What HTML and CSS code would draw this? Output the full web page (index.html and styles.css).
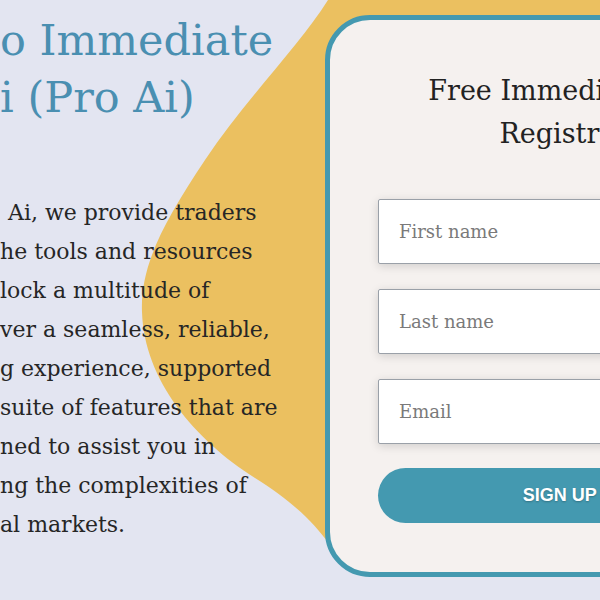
FILE: index.html
```html
<!DOCTYPE html>
<html lang="en">
<head>
    <meta charset="UTF-8">
    <meta name="viewport" content="width=device-width, initial-scale=1.0">
    <title>Immediate Pro Ai</title>
    <link rel="stylesheet" href="styles.css">
</head>
<body>
    <div class="hero">
        <!-- yellow shape behind the hero -->
        <svg class="blob" width="600" height="600" viewBox="0 0 600 600">
            <path d="M328,0 C300,45 245,100 205,160 C165,220 140,265 142,312 C144,380 195,440 255,478 C290,500 312,520 330,545 L600,545 L600,0 Z" fill="#ebc060"/>
        </svg>

        <div class="intro">
            <h1>o Immediate<br>i (Pro Ai)</h1>
            <p>
                <span class="first">Ai, we provide traders</span><br>
                he tools and resources<br>
                lock a multitude of<br>
                ver a seamless, reliable,<br>
                g experience, supported<br>
                suite of features that are<br>
                ned to assist you in<br>
                ng the complexities of<br>
                al markets.
            </p>
        </div>

        <!-- Sign up card -->
        <div class="card">
            <h2>Free Immediate Pro Ai<br>Registration</h2>
            <form class="signup" onsubmit="return false">
                <input type="text" placeholder="First name">
                <input type="text" placeholder="Last name">
                <input type="email" placeholder="Email">
                <button type="submit">SIGN UP NOW</button>
            </form>
        </div>
    </div>
</body>
</html>
```

FILE: styles.css
```css
body {
    margin: 0;
    padding: 0;
    background-color: #e3e5f1;
    font-family: "DejaVu Serif", "Liberation Serif", serif;
    overflow: hidden;
}
.hero {
    position: relative;
    display: flex;
    width: 600px;
    height: 600px;
    overflow: hidden;
}
.blob {
    position: absolute;
    left: 0;
    top: 0;
}
.intro {
    position: relative;
    flex: 0 0 325px;
}
.intro h1 {
    margin: 12px 0 0 0;
    font-size: 43px;
    font-weight: normal;
    line-height: 57px;
    color: #4a8fb1;
    white-space: nowrap;
}
.intro p {
    margin: 67px 0 0 0;
    font-size: 22px;
    line-height: 39px;
    color: #262626;
    white-space: nowrap;
}
.intro .first {
    padding-left: 8px;
}
.card {
    position: relative;
    flex: 0 0 518px;
    box-sizing: border-box;
    margin-top: 15px;
    height: 562px;
    padding: 49px 48px 0 48px;
    background-color: #f5f1ef;
    border: 5px solid #4499b0;
    border-radius: 45px;
}
.card h2 {
    margin: 0;
    text-align: center;
    font-size: 27px;
    font-weight: normal;
    line-height: 43px;
    color: #222;
}
.signup {
    display: flex;
    flex-direction: column;
    gap: 25px;
    margin-top: 44px;
}
.signup input {
    height: 65px;
    box-sizing: border-box;
    padding: 0 20px;
    font-family: "DejaVu Serif", "Liberation Serif", serif;
    font-size: 18px;
    background-color: #fff;
    border: 1px solid #9aa0a8;
    border-radius: 2px;
    box-shadow: 0 2px 10px rgba(0, 0, 0, 0.15);
}
.signup input::placeholder {
    color: #7a7a7a;
}
.signup button {
    height: 55px;
    margin-top: -1px;
    border: none;
    border-radius: 28px;
    background-color: #4499b0;
    color: #fff;
    font-family: "Liberation Sans", Arial, sans-serif;
    font-size: 18px;
    font-weight: bold;
    text-shadow: 0 1px 2px rgba(0, 0, 0, 0.25);
    cursor: pointer;
}
```
